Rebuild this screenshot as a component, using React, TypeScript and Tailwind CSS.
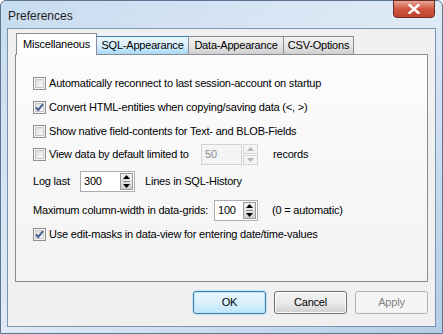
import React from "react";

const font = { fontFamily: '"Liberation Sans", Arial, sans-serif' };

function Check({ checked }: { checked?: boolean }) {
  return (
    <span className="w-[13px] h-[13px] shrink-0 border border-[#8f8f8f] bg-[#f4f4f4] flex items-center justify-center">
      <span className="w-[9px] h-[9px] border border-[#c9c9c9] bg-gradient-to-br from-[#dcdcdc] to-[#fbfbfb] flex items-center justify-center">
        {checked && (
          <svg width="11" height="11" viewBox="0 0 11 11" className="-m-[2px]">
            <path d="M2 5.5 L4.3 8 L9 2.2" fill="none" stroke="#4a5f97" strokeWidth="2" />
          </svg>
        )}
      </span>
    </span>
  );
}

function CheckRow({ label, checked, h }: { label: string; checked?: boolean; h: string }) {
  return (
    <div className={`flex items-center gap-[3px] ${h}`}>
      <Check checked={checked} />
      <span>{label}</span>
    </div>
  );
}

function Arrow({ up, color }: { up?: boolean; color: string }) {
  return (
    <svg width="7" height="4" viewBox="0 0 7 4">
      <path d={up ? "M0 4 L3.5 0 L7 4 Z" : "M0 0 L3.5 4 L7 0 Z"} fill={color} />
    </svg>
  );
}

function Spin({ value, w, disabled }: { value: string; w: string; disabled?: boolean }) {
  if (disabled) {
    return (
      <div className="flex items-stretch h-[21px]">
        <div className={`${w} border border-[#cfd3d8] bg-[#f4f4f4] text-[#8d8d8d] pl-[3px] flex items-center`}>
          {value}
        </div>
        <div className="w-[15px] ml-[1px] flex flex-col gap-[1px]">
          <div className="flex-1 border border-[#d6d6d6] bg-[#f4f4f4] flex items-center justify-center">
            <Arrow up color="#b5b5b5" />
          </div>
          <div className="flex-1 border border-[#d6d6d6] bg-[#f4f4f4] flex items-center justify-center">
            <Arrow color="#b5b5b5" />
          </div>
        </div>
      </div>
    );
  }
  return (
    <div className={`${w} h-[21px] border border-[#abadb3] bg-white flex items-stretch`}>
      <div className="flex-1 pl-[3px] flex items-center">{value}</div>
      <div className="w-[13px] my-[1px] mr-[1px] border border-[#9a9a9a] bg-gradient-to-b from-[#f3f3f3] via-[#e3e3e3] to-[#cfcfcf] flex flex-col items-center justify-center gap-[2px]">
        <Arrow up color="#000" />
        <span className="w-[7px] h-px bg-[#8a8a8a]" />
        <Arrow color="#000" />
      </div>
    </div>
  );
}

function Tab({ label, w, kind }: { label: string; w: string; kind: "sel" | "hot" | "norm" }) {
  if (kind === "sel") {
    return (
      <div className={`${w} h-[22px] -mb-px border border-b-0 border-[#898c95] bg-white relative z-10 flex items-center justify-center`}>
        {label}
      </div>
    );
  }
  const cls =
    kind === "hot"
      ? "border-[#3c7fb1] bg-gradient-to-b from-[#eaf6fd] via-[#d9f0fc] to-[#a7d9f5]"
      : "border-[#898c95] bg-gradient-to-b from-[#f2f2f2] via-[#e6e6e6] to-[#cfcfcf]";
  return (
    <div className={`${w} h-[18px] -ml-px border border-b-0 ${cls} flex items-center justify-center`}>
      {label}
    </div>
  );
}

function Button({ label, kind }: { label: string; kind: "def" | "norm" | "dis" }) {
  const cls =
    kind === "def"
      ? "border-[#3c7fb1] bg-gradient-to-b from-[#eaf6fd] via-[#d9f0fc] to-[#bee6fd] shadow-[inset_0_0_0_1px_#c4e5f6,0_0_2px_#6ac6f6] text-black"
      : kind === "norm"
        ? "border-[#707070] bg-gradient-to-b from-[#f2f2f2] via-[#ebebeb] to-[#cfcfcf] shadow-[inset_0_0_0_1px_#fcfcfc] text-black"
        : "border-[#adb2b5] bg-[#f4f4f4] text-[#838383]";
  return (
    <div className={`w-[73px] h-[23px] rounded-[3px] border ${cls} flex items-center justify-center`}>
      {label}
    </div>
  );
}

export default function App() {
  return (
    <div
      className="w-[443px] h-[334px] flex flex-col bg-gradient-to-br from-[#c8dcf0] via-[#dfeaf6] to-[#b4cde6] border border-[#5a7492] rounded-t-[6px] text-[11px] tracking-[-0.2px] whitespace-nowrap text-black"
      style={font}
    >
      <div className="h-[27px] flex items-start justify-between pl-[7px] pr-[7px] shrink-0">
        <span className="text-[12px] tracking-normal mt-[6px] text-[#1e1e1e]">Preferences</span>
        <div className="w-[42px] h-[18px] -mt-px rounded-b-[4px] border border-[#6b2a25] bg-gradient-to-b from-[#e8a493] via-[#d0563f] to-[#c0402b] flex items-center justify-center">
          <svg width="12" height="10" viewBox="0 0 12 10">
            <path d="M1.5 1 L10.5 9 M10.5 1 L1.5 9" stroke="#fff" strokeWidth="2.4" strokeLinecap="square" />
          </svg>
        </div>
      </div>
      <div className="flex-1 mx-[6px] mb-[6px] border border-[#7b93ad] bg-[#f0f0f0] flex flex-col px-[7px] pt-[4px]">
        <div className="flex items-end h-[21px] pl-px">
          <Tab label="Miscellaneous" w="w-[81px]" kind="sel" />
          <Tab label="SQL-Appearance" w="w-[93px]" kind="hot" />
          <Tab label="Data-Appearance" w="w-[96px]" kind="norm" />
          <Tab label="CSV-Options" w="w-[71px]" kind="norm" />
        </div>
        <div className="h-[228px] border border-[#898c95] bg-gradient-to-b from-[#fcfcfe] to-[#f3f3f3] flex flex-col pt-[16px] pl-[17px]">
          <CheckRow h="h-[24px]" label="Automatically reconnect to last session-account on startup" />
          <CheckRow h="h-[24px]" checked label="Convert HTML-entities when copying/saving data (<, >)" />
          <CheckRow h="h-[24px]" label="Show native field-contents for Text- and BLOB-Fields" />
          <div className="flex items-center h-[23px]">
            <Check />
            <span className="ml-[3px] w-[152px]">View data by default limited to</span>
            <Spin value="50" w="w-[41px]" disabled />
            <span className="ml-[15px]">records</span>
          </div>
          <div className="flex items-center h-[30px]">
            <span className="w-[47px]">Log last</span>
            <Spin value="300" w="w-[55px]" />
            <span className="ml-[10px]">Lines in SQL-History</span>
          </div>
          <div className="flex items-center h-[28px]">
            <span className="w-[181px]">Maximum column-width in data-grids:</span>
            <Spin value="100" w="w-[44px]" />
            <span className="ml-[14px]">(0 = automatic)</span>
          </div>
          <CheckRow h="h-[20px]" checked label="Use edit-masks in data-view for entering date/time-values" />
        </div>
        <div className="flex justify-end gap-[8px] pt-[9px]">
          <Button label="OK" kind="def" />
          <Button label="Cancel" kind="norm" />
          <Button label="Apply" kind="dis" />
        </div>
      </div>
    </div>
  );
}
